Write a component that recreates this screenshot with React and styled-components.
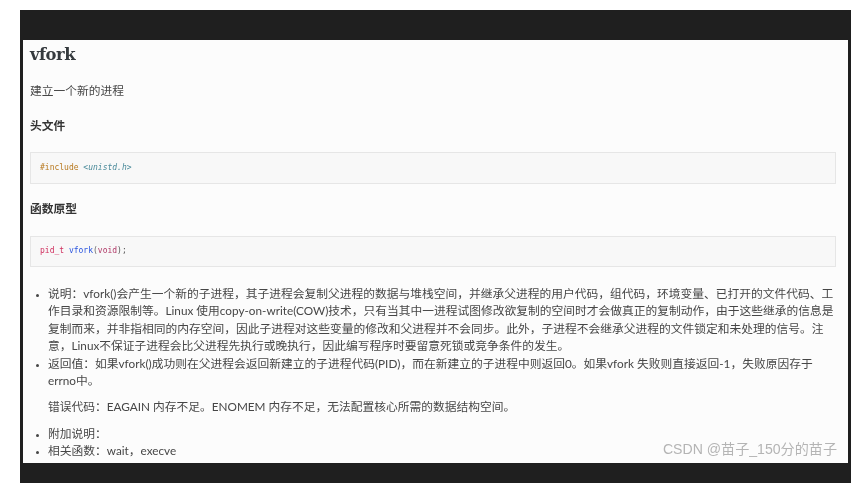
import React from "react";
import styled, { createGlobalStyle } from "styled-components";

const Global = createGlobalStyle`
  html, body { margin: 0; padding: 0; background: #fff; }
  body { font-family: Lato, "Noto Sans CJK SC", sans-serif; }
`;
const Frame = styled.div`
  box-sizing: border-box;
  width: 831px;
  height: 473px;
  margin: 10px 0 0 20px;
  padding: 30px 3px 20px;
  background: #1f1f1f;
  display: flex;
`;
const Page = styled.main`
  position: relative;
  flex: 1;
  box-sizing: border-box;
  padding: 0 12px 0 7px;
  background: #fcfcfc;
  color: #464646;
  font-size: 11.76px;
  line-height: 17.5px;
  overflow: hidden;
  filter: blur(0.4px);
`;
const Title = styled.h1`
  margin: 4px 0 0;
  height: 22px;
  font: bold 16.4px/22px "DejaVu Serif", "Noto Serif CJK SC", serif;
  color: #353a3e;
  letter-spacing: -0.5px;
`;
const Para = styled.p`
  margin: 16px 0 0;
  white-space: nowrap;
`;
const Heading = styled.h4`
  margin: ${(p) => p.$top}px 0 0;
  font-size: 11.76px;
  line-height: 18px;
  font-weight: 700;
  color: #343434;
`;
const Code = styled.pre`
  box-sizing: border-box;
  height: ${(p) => p.$h}px;
  margin: ${(p) => p.$top}px 0 0;
  padding: 0 9px;
  display: flex;
  align-items: center;
  background: #f8f8f8;
  border: 1px solid #e6e6e6;
  font: 8px/12px "DejaVu Sans Mono", monospace;
  color: #444;
`;
const Token = styled.span`
  color: ${(p) => p.$c};
  font-style: ${(p) => (p.$i ? "italic" : "normal")};
  white-space: pre;
`;
const List = styled.ul`
  margin: ${(p) => p.$top}px 0 0;
  padding: 0 0 0 18px;
  white-space: nowrap;
  list-style: disc;
  li::marker { font-size: 8px; }
`;
const Note = styled.p`
  margin: 8.5px 0 9px;
`;
const Watermark = styled.span`
  position: absolute;
  right: 11px;
  bottom: 4px;
  font: 14.1px/20px "Liberation Sans", "Noto Sans CJK SC", sans-serif;
  color: #b4b4b4;
  white-space: nowrap;
`;

export default function App() {
  return (
    <>
      <Global />
      <Frame>
        <Page>
          <Title>vfork</Title>
          <Para>建立一个新的进程</Para>
          <Heading $top={17}>头文件</Heading>
          <Code $top={17} $h={32}>
            <Token $c="#b8791f">#include</Token>
            <Token> </Token>
            <Token $c="#4a8a9a" $i>&lt;unistd.h&gt;</Token>
          </Code>
          <Heading $top={16}>函数原型</Heading>
          <Code $top={18} $h={31}>
            <Token $c="#d0305f">pid_t</Token>
            <Token> </Token>
            <Token $c="#2a55e0">vfork</Token>
            <Token $c="#666">(</Token>
            <Token $c="#b03a68">void</Token>
            <Token $c="#555">);</Token>
          </Code>
          <List $top={18}>
            <li>
              说明：vfork()会产生一个新的子进程，其子进程会复制父进程的数据与堆栈空间，并继承父进程的用户代码，组代码，环境变量、已打开的文件代码、工<br />
              作目录和资源限制等。Linux 使用copy-on-write(COW)技术，只有当其中一进程试图修改欲复制的空间时才会做真正的复制动作，由于这些继承的信息是<br />
              复制而来，并非指相同的内存空间，因此子进程对这些变量的修改和父进程并不会同步。此外，子进程不会继承父进程的文件锁定和未处理的信号。注<br />
              意，Linux不保证子进程会比父进程先执行或晚执行，因此编写程序时要留意死锁或竞争条件的发生。
            </li>
            <li>
              返回值：如果vfork()成功则在父进程会返回新建立的子进程代码(PID)，而在新建立的子进程中则返回0。如果vfork 失败则直接返回-1，失败原因存于<br />
              errno中。
              <Note>错误代码：EAGAIN 内存不足。ENOMEM 内存不足，无法配置核心所需的数据结构空间。</Note>
            </li>
            <li>附加说明：</li>
            <li>相关函数：wait，execve</li>
          </List>
          <Watermark>CSDN @苗子_150分的苗子</Watermark>
        </Page>
      </Frame>
    </>
  );
}
